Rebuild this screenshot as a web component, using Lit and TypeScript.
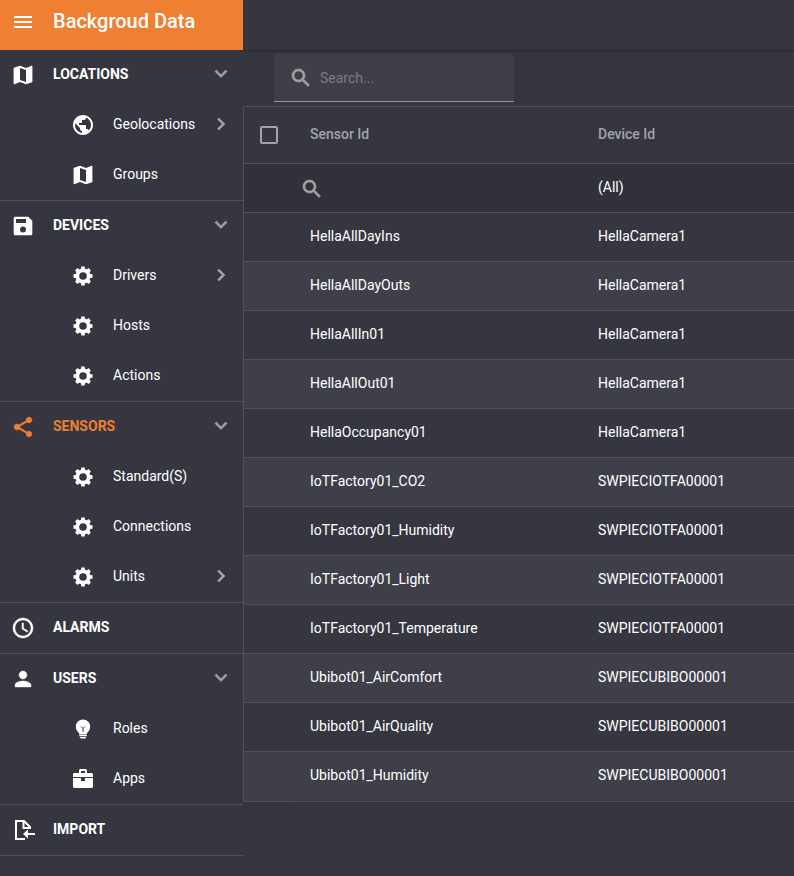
import { LitElement, html, svg, css, nothing } from "lit";
import { customElement, state } from "lit/decorators.js";
import { classMap } from "lit/directives/class-map.js";

const gearTeeth = [0, 45, 90, 135, 180, 225, 270, 315];

const icons = {
  menu: svg`<path d="M3 18h18v-2H3v2zm0-5h18v-2H3v2zm0-7v2h18V6H3z"/>`,
  map: svg`<path d="M20.8 2.800l-.2.03L15 5 9 2.800 3 4.700c-.3.1-.4.3-.4.5V20.700c0 .28.22.5.5.5l.2-.03L9 19l6 2.200 6-1.900c.3-.1.4-.3.4-.5V3.300c0-.28-.3-.5-.6-.5zM15 19l-6-2.110V5l6 2.110V19z"/>`,
  globe: svg`<path d="M12 2C6.48 2 2 6.48 2 12s4.48 10 10 10 10-4.480 10-10S17.520 2 12 2zm-1 17.930c-3.950-.49-7-3.850-7-7.930 0-.62.08-1.210.21-1.790L9 15v1c0 1.100.9 2 2 2v1.930zm6.900-2.540c-.26-.81-1-1.390-1.900-1.390h-1v-3c0-.55-.45-1-1-1H8v-2h2c.55 0 1-.45 1-1V7h2c1.100 0 2-.9 2-2v-.41c2.930 1.190 5 4.060 5 7.410 0 2.080-.8 3.970-2.100 5.390z"/>`,
  save: svg`<path fill-rule="evenodd" d="M17.200 2.700H4.300c-.9 0-1.600.7-1.600 1.600v15.400c0 .9.7 1.600 1.600 1.600h15.400c.9 0 1.600-.7 1.600-1.600V6.800l-4.100-4.100zM12 18.500a3 3 0 1 1 0-6 3 3 0 0 1 0 6zM15 9H5V5h10v4z"/>`,
  gear: svg`<path fill-rule="evenodd" d="M12 4.400a7.600 7.600 0 1 0 0 15.200 7.600 7.600 0 0 0 0-15.200zm0 3.800a3.800 3.800 0 1 1 0 7.600 3.800 3.800 0 0 1 0-7.600z"/>${gearTeeth.map(
    (a) => svg`<path transform="rotate(${a} 12 12)" d="M9.900 6l.4-3.500h3.400l.4 3.500z"/>`,
  )}`,
  share: svg`<path class="bold" d="M18 16.080c-.76 0-1.440.3-1.960.77L8.910 12.700c.05-.23.09-.46.09-.7s-.04-.47-.09-.7l7.050-4.110c.54.5 1.250.81 2.040.81 1.660 0 3-1.340 3-3s-1.340-3-3-3-3 1.340-3 3c0 .24.04.47.09.7L8.040 9.810C7.500 9.310 6.790 9 6 9c-1.660 0-3 1.340-3 3s1.340 3 3 3c.79 0 1.500-.31 2.040-.81l7.120 4.160c-.05.21-.08.43-.08.65 0 1.610 1.310 2.920 2.920 2.920s2.920-1.310 2.920-2.920-1.310-2.920-2.920-2.920z"/>`,
  clock: svg`<path class="bold" d="M11.990 2C6.470 2 2 6.480 2 12s4.470 10 9.990 10C17.520 22 22 17.520 22 12S17.520 2 11.990 2zM12 20c-4.420 0-8-3.580-8-8s3.580-8 8-8 8 3.580 8 8-3.580 8-8 8zm.5-13H11v6l5.250 3.150.75-1.230-4.500-2.670z"/>`,
  user: svg`<path class="bold" d="M12 12c2.210 0 4-1.790 4-4s-1.790-4-4-4-4 1.790-4 4 1.790 4 4 4zm0 2c-2.670 0-8 1.340-8 4v2h16v-2c0-2.660-5.330-4-8-4z"/>`,
  bulb: svg`<path d="M12 2.500a7.200 7.200 0 0 0-7.200 7.200c0 2.500 1.300 4.300 2.500 5.500.6.600.7 1 .7 1.800h8c0-.8.100-1.200.7-1.800 1.200-1.200 2.500-3 2.500-5.500A7.200 7.200 0 0 0 12 2.500zM8.200 17.600h7.600v1.600H8.200zM9 19.900h6c0 1.200-.8 1.700-1.500 1.700h-3C9.800 21.600 9 21.100 9 19.900z"/><path class="cut" d="M10 9.500l2 2 2-2M12 11.500V15"/>`,
  briefcase: svg`<path fill-rule="evenodd" d="M8 6V3.500C8 2.700 8.600 2 9.500 2h5c.9 0 1.500.7 1.500 1.500V6h4.500c.8 0 1.500.7 1.500 1.500V10H2V7.500C2 6.700 2.700 6 3.500 6H8zm2 0h4V4h-4v2zM2 11h8v3h4v-3h8v8.500c0 .8-.7 1.500-1.500 1.500h-17c-.8 0-1.500-.7-1.500-1.500V11z"/>`,
  import: svg`<path class="line" d="M14 21H5V3h8l6 6v2M12.500 3v7H19M24 16H14"/><path d="M12 16l5-4.500v9z"/>`,
  down: svg`<path d="M16.590 8.090L12 12.670 7.410 8.090 6 9.500l6 6 6-6z"/>`,
  right: svg`<path d="M10 6L8.590 7.410 13.170 12l-4.580 4.590L10 18l6-6z"/>`,
  search: svg`<path d="M15.500 14h-.79l-.28-.27C15.410 12.590 16 11.110 16 9.500 16 5.910 13.090 3 9.500 3S3 5.910 3 9.500 5.910 16 9.500 16c1.610 0 3.090-.59 4.230-1.570l.27.28v.79l5 4.990L20.490 19l-4.990-5zm-6 0C7.010 14 5 11.990 5 9.500S7.010 5 9.500 5 14 7.010 14 9.500 11.990 14 9.500 14z"/>`,
};

type IconName = keyof typeof icons;

const icon = (name: IconName, cls = "") =>
  html`<svg class="icon ${cls}" viewBox="0 0 24 24" aria-hidden="true">${icons[name]}</svg>`;

interface Item {
  label: string;
  icon: IconName;
  more?: boolean;
}

interface Group {
  label: string;
  icon: IconName;
  active?: boolean;
  items: Item[];
}

const groups: Group[] = [
  {
    label: "LOCATIONS",
    icon: "map",
    items: [
      { label: "Geolocations", icon: "globe", more: true },
      { label: "Groups", icon: "map" },
    ],
  },
  {
    label: "DEVICES",
    icon: "save",
    items: [
      { label: "Drivers", icon: "gear", more: true },
      { label: "Hosts", icon: "gear" },
      { label: "Actions", icon: "gear" },
    ],
  },
  {
    label: "SENSORS",
    icon: "share",
    active: true,
    items: [
      { label: "Standard(S)", icon: "gear" },
      { label: "Connections", icon: "gear" },
      { label: "Units", icon: "gear", more: true },
    ],
  },
  { label: "ALARMS", icon: "clock", items: [] },
  {
    label: "USERS",
    icon: "user",
    items: [
      { label: "Roles", icon: "bulb" },
      { label: "Apps", icon: "briefcase" },
    ],
  },
  { label: "IMPORT", icon: "import", items: [] },
];

const sensors: [string, string][] = [
  ["HellaAllDayIns", "HellaCamera1"],
  ["HellaAllDayOuts", "HellaCamera1"],
  ["HellaAllIn01", "HellaCamera1"],
  ["HellaAllOut01", "HellaCamera1"],
  ["HellaOccupancy01", "HellaCamera1"],
  ["IoTFactory01_CO2", "SWPIECIOTFA00001"],
  ["IoTFactory01_Humidity", "SWPIECIOTFA00001"],
  ["IoTFactory01_Light", "SWPIECIOTFA00001"],
  ["IoTFactory01_Temperature", "SWPIECIOTFA00001"],
  ["Ubibot01_AirComfort", "SWPIECUBIBO00001"],
  ["Ubibot01_AirQuality", "SWPIECUBIBO00001"],
  ["Ubibot01_Humidity", "SWPIECUBIBO00001"],
];

const shared = css`
  * {
    box-sizing: border-box;
  }
  button,
  input,
  select {
    font: inherit;
    color: inherit;
    background: none;
    border: 0;
    margin: 0;
    padding: 0;
  }
  button {
    cursor: pointer;
  }
  .icon {
    display: block;
    flex: none;
    width: 24px;
    height: 24px;
    fill: currentColor;
  }
  .muted {
    color: #a3a3a7;
    stroke: currentColor;
    stroke-width: 0.6;
  }
`;

@customElement("side-menu")
export class SideMenu extends LitElement {
  @state() private closed = new Set<string>();

  static styles = [
    shared,
    css`
      :host {
        display: block;
        position: relative;
        z-index: 1;
      }
      .brand {
        display: flex;
        align-items: center;
        gap: 18px;
        height: 50px;
        padding: 0 11px 6px;
        background: #ef7f31;
        color: #fff;
      }
      .title {
        margin: 0;
        font-size: 20px;
        line-height: 24px;
        font-weight: 500;
        padding-bottom: 2px;
      }
      .list {
        list-style: none;
        margin: 0;
        padding: 0;
      }
      .group {
        border-bottom: 1px solid #515159;
      }
      .row {
        display: flex;
        align-items: center;
        gap: 18px;
        width: 100%;
        height: 50px;
        padding: 0 10px 0 11px;
        color: #fff;
        text-align: left;
        text-decoration: none;
      }
      .head {
        font-weight: 700;
      }
      .active {
        color: #ef7f31;
      }
      .item {
        padding-left: 71px;
      }
      .label {
        flex: 1;
        min-width: 0;
        padding-bottom: 2px;
      }
      .arrow {
        margin-bottom: 2px;
      }
      .cut {
        fill: none;
        stroke: #363640;
      }
      .line {
        fill: none;
        stroke: currentColor;
        stroke-width: 2;
      }
      .bold {
        stroke: currentColor;
        stroke-width: 0.4;
      }
    `,
  ];

  private toggle(label: string) {
    const next = new Set(this.closed);
    if (!next.delete(label)) next.add(label);
    this.closed = next;
  }

  private renderHead(group: Group) {
    const cls = classMap({ row: true, head: true, active: !!group.active });
    if (!group.items.length) {
      return html`<a class=${cls} href="#">${icon(group.icon)}<span class="label">${group.label}</span></a>`;
    }
    const open = !this.closed.has(group.label);
    return html`<button
      class=${cls}
      type="button"
      aria-expanded=${open}
      @click=${() => this.toggle(group.label)}
    >
      ${icon(group.icon)}<span class="label">${group.label}</span>${icon(open ? "down" : "right", "arrow muted")}
    </button>`;
  }

  render() {
    return html`
      <header class="brand">
        <button type="button" aria-label="Menu">${icon("menu")}</button>
        <h1 class="title">Backgroud Data</h1>
      </header>
      <nav>
        <ul class="list">
          ${groups.map(
            (group) => html`<li class="group">
              ${this.renderHead(group)}
              ${group.items.length && !this.closed.has(group.label)
                ? html`<ul class="list">
                    ${group.items.map(
                      (item) => html`<li>
                        <a class="row item" href="#">
                          ${icon(item.icon)}<span class="label">${item.label}</span>${item.more
                            ? icon("right", "arrow muted")
                            : nothing}
                        </a>
                      </li>`,
                    )}
                  </ul>`
                : nothing}
            </li>`,
          )}
        </ul>
      </nav>
    `;
  }
}

@customElement("sensor-grid")
export class SensorGrid extends LitElement {
  static styles = [
    shared,
    css`
      :host {
        display: block;
      }
      .tools {
        padding: 4px 31px;
      }
      .search {
        display: flex;
        align-items: center;
        gap: 7px;
        width: 240px;
        height: 48px;
        padding: 0 15px;
        background: #3f3f47;
        border-bottom: 1px solid #98989c;
        border-radius: 4px 4px 0 0;
      }
      .field {
        flex: 1;
        min-width: 0;
        outline: none;
      }
      .field::placeholder {
        color: #7c7c80;
        opacity: 1;
      }
      .frame {
        border: 1px solid #515159;
        border-right: 0;
      }
      .table {
        width: 100%;
        table-layout: fixed;
        border-spacing: 0;
      }
      .pick {
        width: 50px;
      }
      .sensor {
        width: 288px;
      }
      .cell {
        height: 49px;
        padding: 0 16px 2px;
        border-bottom: 1px solid #515159;
        text-align: left;
        font-weight: 400;
      }
      .heading .cell {
        height: 57px;
        font-weight: 500;
        color: #a3a3a7;
      }
      .filter {
        background: #313139;
      }
      .filter .pad {
        padding: 2px 6px 0;
      }
      .row:nth-child(even) {
        background: #3f3f4a;
      }
      .row:last-child .cell {
        border-bottom-color: #36363f;
      }
      .row:last-child .cell:first-child {
        border-bottom-color: transparent;
      }
      .check {
        appearance: none;
        display: block;
        width: 18px;
        height: 18px;
        border: 2px solid #a3a3a7;
        border-radius: 2px;
      }
      .check:checked {
        background: #ef7f31;
      }
      .heading .box {
        padding: 0 16px;
      }
      .find {
        display: flex;
        align-items: center;
      }
      .choice {
        appearance: none;
        width: 100%;
      }
    `,
  ];

  render() {
    return html`
      <div class="tools">
        <label class="search">
          ${icon("search", "muted")}
          <input class="field" type="text" placeholder="Search..." aria-label="Search" />
        </label>
      </div>
      <div class="frame">
        <table class="table">
          <colgroup>
            <col class="pick" />
            <col class="sensor" />
            <col />
          </colgroup>
          <thead>
            <tr class="heading">
              <th class="cell box"><input class="check" type="checkbox" aria-label="Select all" /></th>
              <th class="cell">Sensor Id</th>
              <th class="cell">Device Id</th>
            </tr>
            <tr class="filter">
              <td class="cell"></td>
              <td class="cell pad">
                <label class="find">
                  ${icon("search", "muted")}
                  <input class="field" type="text" aria-label="Filter by sensor id" />
                </label>
              </td>
              <td class="cell">
                <select class="choice" aria-label="Filter by device id">
                  <option>(All)</option>
                </select>
              </td>
            </tr>
          </thead>
          <tbody>
            ${sensors.map(
              ([sensor, device]) => html`<tr class="row">
                <td class="cell"></td>
                <td class="cell">${sensor}</td>
                <td class="cell">${device}</td>
              </tr>`,
            )}
          </tbody>
        </table>
      </div>
    `;
  }
}

@customElement("app-root")
export class AppRoot extends LitElement {
  static styles = css`
    :host {
      display: grid;
      grid-template-columns: 243px minmax(0, 1fr);
      min-height: 100vh;
      background: #363640;
      color: #fff;
      font: 14px/20px Roboto, "Liberation Sans", sans-serif;
    }
    .bar {
      height: 50px;
      box-shadow: 0 1px 2px #25252c;
    }
  `;

  render() {
    return html`
      <side-menu></side-menu>
      <main>
        <div class="bar"></div>
        <sensor-grid></sensor-grid>
      </main>
    `;
  }
}
